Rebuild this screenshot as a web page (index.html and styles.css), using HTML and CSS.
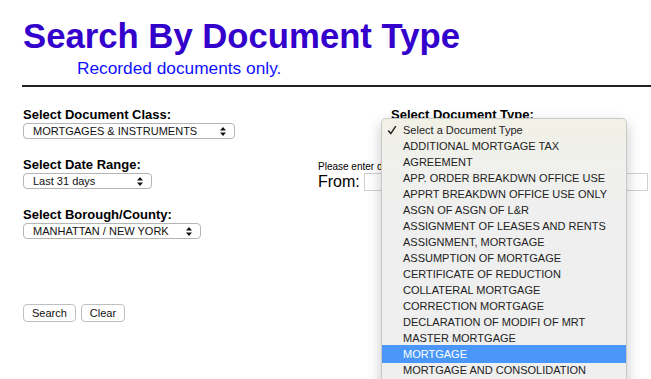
FILE: index.html
```html
<!DOCTYPE html>
<html lang="en">
<head>
  <meta charset="UTF-8" />
  <title>Search By Document Type</title>
  <link rel="stylesheet" href="styles.css">
</head>
<body>
  <div class="page">
    <h1>Search By Document Type</h1>
    <div class="subtitle">Recorded documents only.</div>
    <hr class="rule">

    <div class="form-grid">
      <div class="field">
        <div class="label">Select Document Class:</div>
        <div class="select w-class"><span>MORTGAGES &amp; INSTRUMENTS</span>
          <svg class="arrows" width="6" height="9" viewBox="0 0 6 9"><path d="M3 0 L6 3.5 H0 Z M3 9 L6 5.5 H0 Z" fill="#111"/></svg>
        </div>
      </div>
      <div class="right-cell doc-type">
        <div class="label">Select Document Type:</div>
      </div>

      <div class="field">
        <div class="label">Select Date Range:</div>
        <div class="select w-date"><span>Last 31 days</span>
          <svg class="arrows" width="6" height="9" viewBox="0 0 6 9"><path d="M3 0 L6 3.5 H0 Z M3 9 L6 5.5 H0 Z" fill="#111"/></svg>
        </div>
      </div>
      <div class="right-cell dates">
        <div class="hint">Please enter date range:</div>
        <div class="from-row">
          <span class="from-label">From:</span>
          <span class="text-input"></span>
        </div>
      </div>

      <div class="field">
        <div class="label">Select Borough/County:</div>
        <div class="select w-borough"><span>MANHATTAN / NEW YORK</span>
          <svg class="arrows" width="6" height="9" viewBox="0 0 6 9"><path d="M3 0 L6 3.5 H0 Z M3 9 L6 5.5 H0 Z" fill="#111"/></svg>
        </div>
      </div>
      <div class="right-cell"></div>
    </div>

    <div class="buttons">
      <button class="btn">Search</button>
      <button class="btn">Clear</button>
    </div>
  </div>

  <!-- open menu of the document type select -->
  <div class="menu">
    <div class="menu-item checked">
      <svg class="check" width="10" height="10" viewBox="0 0 10 10"><path d="M1.2 5.6 L3.8 8.6 L8.8 1.2" fill="none" stroke="#222" stroke-width="1.5"/></svg>
      Select a Document Type
    </div>
    <div class="menu-item">ADDITIONAL MORTGAGE TAX</div>
    <div class="menu-item">AGREEMENT</div>
    <div class="menu-item">APP. ORDER BREAKDWN OFFICE USE</div>
    <div class="menu-item">APPRT BREAKDWN OFFICE USE ONLY</div>
    <div class="menu-item">ASGN OF ASGN OF L&amp;R</div>
    <div class="menu-item">ASSIGNMENT OF LEASES AND RENTS</div>
    <div class="menu-item">ASSIGNMENT, MORTGAGE</div>
    <div class="menu-item">ASSUMPTION OF MORTGAGE</div>
    <div class="menu-item">CERTIFICATE OF REDUCTION</div>
    <div class="menu-item">COLLATERAL MORTGAGE</div>
    <div class="menu-item">CORRECTION MORTGAGE</div>
    <div class="menu-item">DECLARATION OF MODIFI OF MRT</div>
    <div class="menu-item">MASTER MORTGAGE</div>
    <div class="menu-item selected">MORTGAGE</div>
    <div class="menu-item">MORTGAGE AND CONSOLIDATION</div>
  </div>
</body>
</html>
```

FILE: styles.css
```css
html, body {
  overflow: hidden;
}

body {
  margin: 0;
  font-family: "Liberation Sans", Arial, Helvetica, sans-serif;
  color: #000;
  background: #fff;
  position: relative;
  height: 379px;
}

.page {
  padding-left: 23px;
}

h1 {
  margin: 0;
  padding-top: 16px;
  font-size: 34.7px;
  line-height: 40px;
  font-weight: bold;
  color: #3300cc;
}

.subtitle {
  margin: 2px 0 0 54px;
  font-size: 17.3px;
  line-height: 20px;
  color: #1010ff;
}

.rule {
  margin: 7px 0 0 -1px;
  border: none;
  height: 2px;
  background: #222;
}

.form-grid {
  display: grid;
  grid-template-columns: 295px 1fr;
  margin-top: 20px;
}

.field {
  margin-bottom: 18px;
}

.label {
  font-size: 13px;
  line-height: 15px;
  font-weight: bold;
  margin-bottom: 1px;
}

.select {
  display: flex;
  align-items: center;
  justify-content: space-between;
  box-sizing: border-box;
  height: 16px;
  padding: 0 8px 0 9px;
  border: 1px solid #b5b5b5;
  border-radius: 4px;
  background: #fff;
  font-size: 11px;
  color: #111;
}

.w-class { width: 212px; }
.w-date { width: 129px; }
.w-borough { width: 178px; }

.arrows {
  flex-shrink: 0;
}

.doc-type {
  padding-left: 73px;
}

.dates {
  padding-top: 4px;
}

.hint {
  font-size: 10px;
  line-height: 12px;
}

.from-row {
  display: flex;
  align-items: center;
  gap: 4px;
}

.from-label {
  font-size: 16px;
  line-height: 18px;
}

.text-input {
  display: block;
  width: 284px;
  height: 18px;
  box-sizing: border-box;
  border: 1px solid #d0d0d0;
}

.buttons {
  display: flex;
  gap: 5px;
  margin-top: 47px;
}

.btn {
  height: 18px;
  padding: 0 8px;
  font-family: "Liberation Sans", Arial, sans-serif;
  font-size: 11px;
  color: #111;
  background: #fff;
  border: 1px solid #c0c0c0;
  border-radius: 4px;
}

.menu {
  position: absolute;
  left: 381px;
  top: 118px;
  width: 244px;
  height: 270px;
  padding-top: 3px;
  border: 1px solid #c9c9c9;
  border-radius: 5px;
  background: linear-gradient(#f2f1e6 0px, #f0f0ec 40px, #efefef 90px);
  box-shadow: 0 5px 14px rgba(0, 0, 0, 0.22);
  font-size: 11px;
  color: #222;
}

.menu-item {
  position: relative;
  height: 16px;
  line-height: 16px;
  padding-left: 21px;
  white-space: nowrap;
}

.check {
  position: absolute;
  left: 5px;
  top: 3px;
}

.menu-item.selected {
  background: #4a97f9;
  color: #fff;
  height: 18px;
  line-height: 19px;
  margin: -1px 0 -1px;
}
```
